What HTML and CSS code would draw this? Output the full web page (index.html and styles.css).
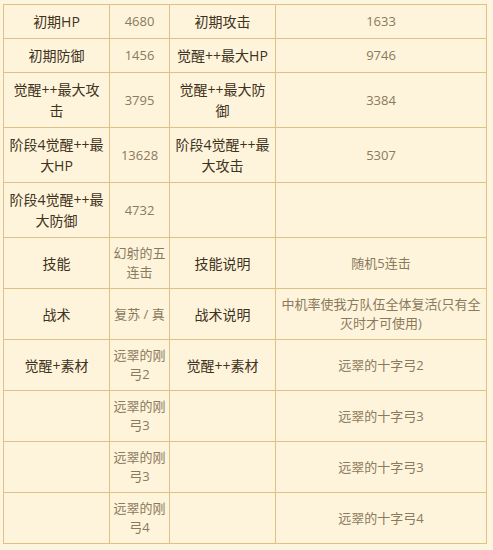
FILE: index.html
```html
<!DOCTYPE html>
<html lang="zh-CN">
<head>
<meta charset="utf-8">
<title>角色数据</title>
<link rel="stylesheet" href="styles.css">
</head>
<body>
<table class="stats">
  <colgroup>
    <col class="c-label">
    <col class="c-value">
    <col class="c-label">
    <col class="c-wide">
  </colgroup>
  <tbody>
    <tr>
      <td class="label">初期HP</td>
      <td class="value">4680</td>
      <td class="label">初期攻击</td>
      <td class="value">1633</td>
    </tr>
    <tr>
      <td class="label">初期防御</td>
      <td class="value">1456</td>
      <td class="label">觉醒++最大HP</td>
      <td class="value">9746</td>
    </tr>
    <tr>
      <td class="label">觉醒++最大攻击</td>
      <td class="value">3795</td>
      <td class="label">觉醒++最大防御</td>
      <td class="value">3384</td>
    </tr>
    <tr>
      <td class="label">阶段4觉醒++最大HP</td>
      <td class="value">13628</td>
      <td class="label">阶段4觉醒++最大攻击</td>
      <td class="value">5307</td>
    </tr>
    <tr>
      <td class="label">阶段4觉醒++最大防御</td>
      <td class="value">4732</td>
      <td class="label"></td>
      <td class="value"></td>
    </tr>
    <tr>
      <td class="label">技能</td>
      <td class="value">幻射的五连击</td>
      <td class="label">技能说明</td>
      <td class="value">随机5连击</td>
    </tr>
    <tr>
      <td class="label">战术</td>
      <td class="value">复苏 / 真</td>
      <td class="label">战术说明</td>
      <td class="value">中机率使我方队伍全体复活(只有全灭时才可使用)</td>
    </tr>
    <tr>
      <td class="label">觉醒+素材</td>
      <td class="value">远翠的刚弓2</td>
      <td class="label">觉醒++素材</td>
      <td class="value">远翠的十字弓2</td>
    </tr>
    <tr>
      <td class="label"></td>
      <td class="value">远翠的刚弓3</td>
      <td class="label"></td>
      <td class="value">远翠的十字弓3</td>
    </tr>
    <tr>
      <td class="label"></td>
      <td class="value">远翠的刚弓3</td>
      <td class="label"></td>
      <td class="value">远翠的十字弓3</td>
    </tr>
    <tr>
      <td class="label"></td>
      <td class="value">远翠的刚弓4</td>
      <td class="label"></td>
      <td class="value">远翠的十字弓4</td>
    </tr>
  </tbody>
</table>
</body>
</html>
```

FILE: styles.css
```css
html, body {
  background: #fef5de;
}
body {
  margin: 0;
  padding: 4px 0 0 3px;
  font-family: "Open Sans", "Noto Sans CJK SC", sans-serif;
}
.stats {
  border-collapse: collapse;
  table-layout: fixed;
  width: 484px;
  background: #fef4dc;
}
.c-label { width: 106px; }
.c-value { width: 60px; }
.c-wide { width: 211px; }
.stats td {
  border: 1px solid #dfc085;
  padding: 6px 3px;
  text-align: center;
  vertical-align: middle;
  word-break: break-all;
}
.label {
  font-size: 14px;
  line-height: 21px;
  color: #3e3220;
}
.value {
  font-size: 13px;
  line-height: 19px;
  color: #8a7a5c;
}
.label:empty, .value:empty {
  line-height: 19px;
}
```
